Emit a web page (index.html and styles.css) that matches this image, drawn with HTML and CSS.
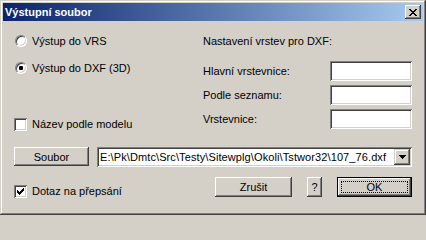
FILE: index.html
```html
<!DOCTYPE html>
<html>
<head>
<meta charset="utf-8">
<link rel="stylesheet" href="styles.css">
</head>
<body>
<div class="window">
  <div class="titlebar">
    <span class="title">Výstupní soubor</span>
    <span class="close">
      <svg width="8" height="7" viewBox="0 0 8 7" shape-rendering="crispEdges">
        <path d="M0 0h2v1H0zM6 0h2v1H6zM1 1h2v1H1zM5 1h2v1H5zM2 2h4v1H2zM3 3h2v1H3zM2 4h4v1H2zM1 5h2v1H1zM5 5h2v1H5zM0 6h2v1H0zM6 6h2v1H6z" fill="#000"/>
      </svg>
    </span>
  </div>
  <div class="content">
    <div class="top">
      <div class="leftcol">
        <div class="opt r1"><span class="radio"></span><span>Výstup do VRS</span></div>
        <div class="opt r2"><span class="radio"><span class="dot"></span></span><span>Výstup do DXF (3D)</span></div>
        <div class="opt c1"><span class="check"></span><span>Název podle modelu</span></div>
      </div>
      <div class="rightcol">
        <div class="heading">Nastavení vrstev pro DXF:</div>
        <div class="field f1"><span>Hlavní vrstevnice:</span><span class="input"></span></div>
        <div class="field"><span>Podle seznamu:</span><span class="input"></span></div>
        <div class="field"><span>Vrstevnice:</span><span class="input"></span></div>
      </div>
    </div>
    <div class="filerow">
      <span class="btn soubor">Soubor</span>
      <div class="combo">
        <span class="combotext">E:\Pk\Dmtc\Src\Testy\Sitewplg\Okoli\Tstwor32\107_76.dxf</span>
        <span class="drop">
          <svg width="7" height="4" viewBox="0 0 7 4" shape-rendering="crispEdges">
            <path d="M0 0h7v1H0zM1 1h5v1H1zM2 2h3v1H2zM3 3h1v1H3z" fill="#000"/>
          </svg>
        </span>
      </div>
    </div>
    <div class="bottom">
      <div class="opt c2">
        <span class="check">
          <svg width="7" height="7" viewBox="0 0 7 7" shape-rendering="crispEdges">
            <path d="M0 2h1v3H0zM1 3h1v3H1zM2 4h1v3H2zM3 3h1v3H3zM4 2h1v3H4zM5 1h1v3H5zM6 0h1v3H6z" fill="#000"/>
          </svg>
        </span>
        <span>Dotaz na přepsání</span>
      </div>
      <div class="buttons">
        <span class="btn zrusit">Zrušit</span>
        <span class="btn help">?</span>
        <span class="btn ok default"><span class="focus">OK</span></span>
      </div>
    </div>
  </div>
</div>
</body>
</html>
```

FILE: styles.css
```css
html, body {
  margin: 0;
  padding: 0;
  background: #d4d0c8;
}
body {
  font-family: "Liberation Sans", Arial, sans-serif;
  font-size: 11px;
  color: #000;
}
.window {
  width: 426px;
  height: 215px;
  box-sizing: border-box;
  padding: 3px;
  background: #d4d0c8;
  box-shadow: inset -1px -1px #404040, inset 1px 1px #d4d0c8, inset -2px -2px #808080, inset 2px 2px #fff;
  display: flex;
  flex-direction: column;
  overflow: hidden;
}
.titlebar {
  height: 18px;
  flex: none;
  background: linear-gradient(to right, #0a246a, #a6caf0);
  display: flex;
  align-items: center;
  padding-left: 2px;
  padding-right: 2px;
}
.title {
  color: #fff;
  font-weight: bold;
  flex: 1;
}
.close {
  width: 16px;
  height: 14px;
  box-sizing: border-box;
  background: #d4d0c8;
  box-shadow: inset -1px -1px #404040, inset 1px 1px #fff, inset -2px -2px #808080, inset 2px 2px #d4d0c8;
  display: flex;
  align-items: center;
  justify-content: center;
  padding-right: 1px;
}
.close svg { display: block; }
.content {
  padding: 0 11px 0 11px;
  display: flex;
  flex-direction: column;
}
.top {
  display: flex;
  height: 111px;
}
.leftcol {
  width: 189px;
  display: flex;
  flex-direction: column;
}
.opt {
  height: 16px;
  display: flex;
  align-items: center;
}
.r1 { margin-top: 12px; }
.r2 { margin-top: 11px; }
.c1 { margin-top: 40px; }
.radio {
  width: 12px;
  height: 12px;
  box-sizing: border-box;
  margin-left: 1px;
  margin-right: 5px;
  border-radius: 50%;
  border: 1px solid;
  border-color: #808080 #fff #fff #808080;
  background: #fff;
  box-shadow: inset 1px 1px #404040, inset -1px -1px #d4d0c8;
  display: flex;
  align-items: center;
  justify-content: center;
}
.dot {
  width: 4px;
  height: 4px;
  border-radius: 1px;
  background: #000;
}
.check {
  width: 13px;
  height: 13px;
  box-sizing: border-box;
  margin-right: 5px;
  background: #fff;
  box-shadow: inset 1px 1px #808080, inset -1px -1px #fff, inset 2px 2px #404040, inset -2px -2px #d4d0c8;
  display: flex;
  align-items: center;
  justify-content: center;
}
.check svg { display: block; }
.rightcol {
  flex: 1;
  display: flex;
  flex-direction: column;
}
.heading {
  height: 16px;
  line-height: 16px;
  margin-top: 12px;
}
.field {
  height: 20px;
  margin-top: 4px;
  display: flex;
  align-items: center;
  justify-content: space-between;
}
.field.f1 { margin-top: 12px; }
.input {
  width: 82px;
  height: 20px;
  box-sizing: border-box;
  background: #fff;
  box-shadow: inset 1px 1px #808080, inset -1px -1px #fff, inset 2px 2px #404040, inset -2px -2px #d4d0c8;
}
.filerow {
  margin-top: 15px;
  display: flex;
  align-items: flex-start;
  gap: 8px;
  height: 20px;
}
.btn {
  box-sizing: border-box;
  background: #d4d0c8;
  box-shadow: inset -1px -1px #404040, inset 1px 1px #fff, inset -2px -2px #808080, inset 2px 2px #d4d0c8;
  display: flex;
  align-items: center;
  justify-content: center;
}
.soubor {
  width: 75px;
  height: 19px;
}
.combo {
  flex: 1;
  height: 20px;
  box-sizing: border-box;
  padding: 2px 2px 2px 3px;
  background: #fff;
  box-shadow: inset 1px 1px #808080, inset -1px -1px #fff, inset 2px 2px #404040, inset -2px -2px #d4d0c8;
  display: flex;
  align-items: center;
}
.combotext {
  flex: 1;
  white-space: nowrap;
  overflow: hidden;
  letter-spacing: 0.1px;
}
.drop {
  width: 16px;
  height: 16px;
  box-sizing: border-box;
  background: #d4d0c8;
  box-shadow: inset -1px -1px #404040, inset 1px 1px #d4d0c8, inset -2px -2px #808080, inset 2px 2px #fff;
  display: flex;
  align-items: center;
  justify-content: center;
}
.drop svg { display: block; }
.bottom {
  margin-top: 10px;
  display: flex;
  align-items: flex-start;
  justify-content: space-between;
}
.c2 { margin-top: 6px; }
.buttons {
  display: flex;
  gap: 15px;
}
.zrusit {
  width: 77px;
  height: 20px;
}
.help {
  width: 15px;
  height: 20px;
}
.ok {
  width: 75px;
  height: 20px;
}
.default {
  border: 1px solid #000;
  padding: 3px;
}
.focus {
  flex: 1;
  align-self: stretch;
  border: 1px dotted #000;
  display: flex;
  align-items: center;
  justify-content: center;
}
```
